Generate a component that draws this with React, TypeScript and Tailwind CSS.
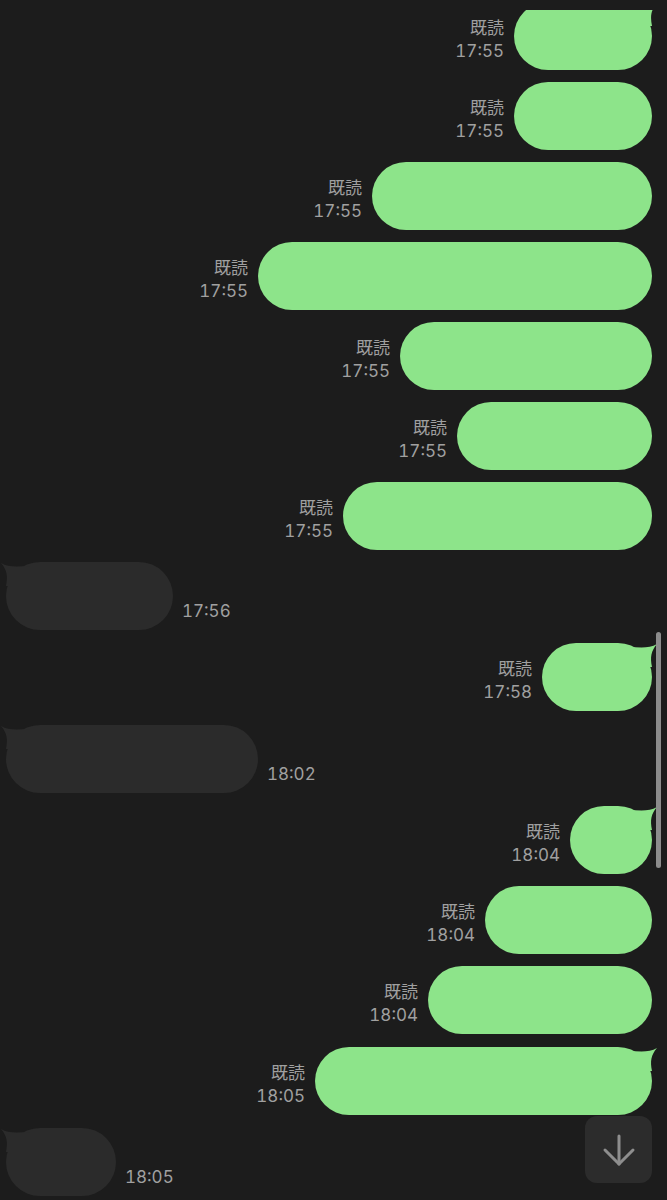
import React from 'react';
import { ArrowDown } from 'lucide-react';

type Msg = {
  id: number;
  mine: boolean;
  width: number;
  gap: number;
  time: string;
  tail?: boolean;
};

const messages: Msg[] = [
  { id: 1, mine: true, width: 138, gap: 0, time: '17:55', tail: true },
  { id: 2, mine: true, width: 138, gap: 12, time: '17:55' },
  { id: 3, mine: true, width: 280, gap: 12, time: '17:55' },
  { id: 4, mine: true, width: 394, gap: 12, time: '17:55' },
  { id: 5, mine: true, width: 252, gap: 12, time: '17:55' },
  { id: 6, mine: true, width: 195, gap: 12, time: '17:55' },
  { id: 7, mine: true, width: 309, gap: 12, time: '17:55' },
  { id: 8, mine: false, width: 167, gap: 12, time: '17:56', tail: true },
  { id: 9, mine: true, width: 110, gap: 13, time: '17:58', tail: true },
  { id: 10, mine: false, width: 252, gap: 14, time: '18:02', tail: true },
  { id: 11, mine: true, width: 82, gap: 13, time: '18:04', tail: true },
  { id: 12, mine: true, width: 167, gap: 12, time: '18:04' },
  { id: 13, mine: true, width: 224, gap: 12, time: '18:04' },
  { id: 14, mine: true, width: 337, gap: 13, time: '18:05', tail: true },
  { id: 15, mine: false, width: 110, gap: 13, time: '18:05', tail: true },
];

// little speech tail that sits on the top corner of a bubble
const Tail: React.FC<{ color: string; flip?: boolean }> = ({ color, flip }) => (
  <svg
    width="30"
    height="24"
    viewBox="0 0 30 24"
    className={`absolute top-0 ${flip ? 'left-[-6px] -scale-x-100' : 'right-[-6px]'}`}
  >
    <path d="M0 4 C10 4 21 6 29 1 C23 8 22 14 24 24 L0 24 Z" fill={color} />
  </svg>
);

const Bubble: React.FC<{ msg: Msg }> = ({ msg }) => {
  const color = msg.mine ? '#8de48a' : '#2b2b2b';
  return (
    <div
      className={`relative h-[68px] rounded-[34px] shrink-0 ${msg.mine ? 'bg-[#8de48a]' : 'bg-[#2b2b2b]'}`}
      style={{ width: msg.width }}
    >
      {msg.tail && <Tail color={color} flip={!msg.mine} />}
    </div>
  );
};

const Row: React.FC<{ msg: Msg }> = ({ msg }) => {
  if (msg.mine) {
    return (
      <div className="flex justify-end items-end pr-[15px]" style={{ marginTop: msg.gap }}>
        <div className="flex flex-col items-end mr-[10px] mb-[7px] text-[17px] leading-[23px] text-[#a0a0a0] tabular-nums">
          <span>既読</span>
          <span>{msg.time}</span>
        </div>
        <Bubble msg={msg} />
      </div>
    );
  }
  return (
    <div className="flex justify-start items-end pl-[6px]" style={{ marginTop: msg.gap }}>
      <Bubble msg={msg} />
      <div className="ml-[9px] mb-[7px] text-[17px] leading-[23px] text-[#a0a0a0] tabular-nums">{msg.time}</div>
    </div>
  );
};

export default function App() {
  return (
    <div
      className="relative w-[667px] h-[1200px] bg-[#1c1c1c] flex flex-col overflow-hidden"
      style={{ fontFamily: '"Inter", "Noto Sans CJK JP", sans-serif' }}
    >
      <div className="h-[10px] shrink-0 bg-[#1c1c1c]" />
      <div className="flex-1 overflow-hidden">
        <div className="flex flex-col -mt-[8px]">
          {messages.map((m) => (
            <Row key={m.id} msg={m} />
          ))}
        </div>
      </div>

      {/* scroll indicator */}
      <div className="absolute left-[656px] top-[632px] w-[5px] h-[236px] rounded-full bg-[#8c8c8c]" />

      {/* jump to latest */}
      <button className="absolute left-[585px] top-[1116px] w-[67px] h-[67px] rounded-[12px] bg-[#2c2c2c] flex items-center justify-center">
        <ArrowDown size={48} strokeWidth={1.5} color="#8e8e8e" />
      </button>
    </div>
  );
}
